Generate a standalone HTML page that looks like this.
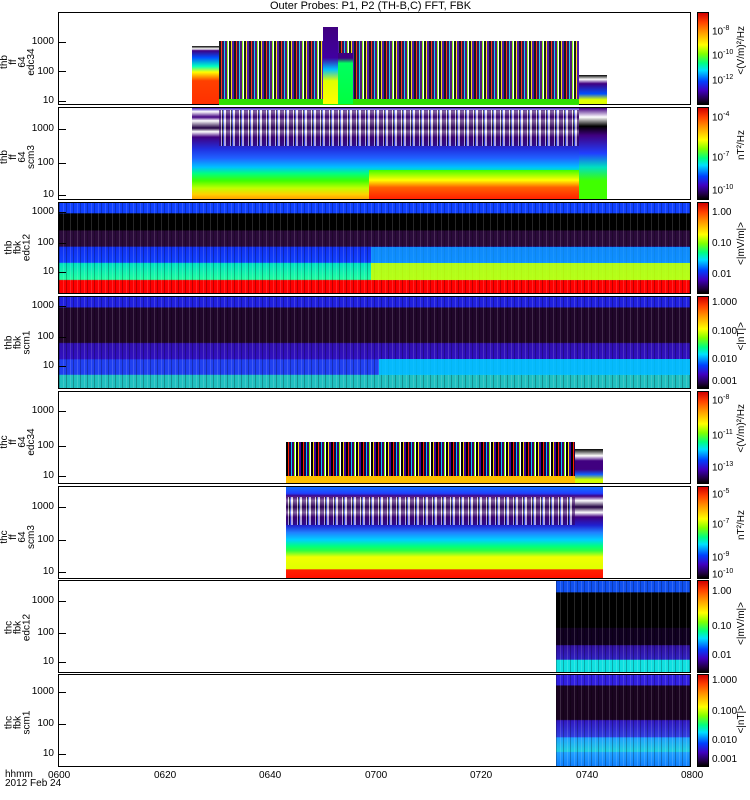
<!DOCTYPE html>
<html><head><meta charset="utf-8"><style>
body{margin:0;background:#fff;width:750px;height:800px;position:relative;overflow:hidden;font-family:"Liberation Sans",sans-serif;font-size:10px;color:#000}
.a{position:absolute}
.p{position:absolute;left:58px;width:633px;border:1px solid #000;box-sizing:border-box}
.cb{position:absolute;left:697px;width:12px;border:1px solid #000;box-sizing:border-box;background:linear-gradient(#d00000,#ff4000 10%,#ff9000 20%,#ffff00 35%,#80ff00 45%,#00ff80 55%,#00e0ff 63%,#0040ff 75%,#4000c0 85%,#200040 95%,#000)}
.yl{position:absolute;left:22px;width:32px;text-align:right;font-size:10px;line-height:10px}
.cl{position:absolute;left:712px;font-size:10px;line-height:10px}
.tt{position:absolute;font-size:10px;line-height:9px;text-align:center;transform:rotate(-90deg);transform-origin:center;white-space:pre}
.un{position:absolute;left:736px;font-size:10px;writing-mode:vertical-rl;transform:rotate(180deg);white-space:nowrap}
.tk{position:absolute;left:58px;width:8px;height:1px;background:#000}
.sp{background:repeating-linear-gradient(90deg,#000 0 2px,#ff2000 2px 3px,#200040 3px 5px,#00c0ff 5px 6px,#3a006a 6px 8px,#80ff00 8px 9px,#fff 9px 10px,#000 10px 12px,#ffe000 12px 13px,#4000a0 13px 15px)}
.n1{background:repeating-linear-gradient(90deg,#3a006a 0 2px,#fff 2px 3px,#000 3px 4px,#2040ff 4px 5px,#fff 5px 7px,#30005a 7px 9px)}
.st{background-image:repeating-linear-gradient(90deg,rgba(0,0,0,.25) 0 1px,transparent 1px 4px,rgba(255,255,255,.15) 4px 5px,transparent 5px 7px)}
</style></head><body>
<div class="a" style="left:270px;top:0;font-size:11px">Outer Probes: P1, P2 (TH-B,C) FFT, FBK</div>

<!-- Panel 1 -->
<div class="p" style="top:12px;height:93px">
 <div class="a" style="left:133px;top:33px;width:27px;height:58px;background:linear-gradient(#000 0,#fff 5%,#400080 8%,#0050ff 20%,#00ffc0 35%,#ffff00 45%,#ff4000 60%,#ff3000)"></div>
 <div class="a sp" style="left:160px;top:28px;width:360px;height:58px;opacity:.9"></div>
 <div class="a" style="left:160px;top:86px;width:360px;height:6px;background:#30e000"></div>
 <div class="a" style="left:264px;top:14px;width:15px;height:77px;background:linear-gradient(#400080,#4000a0 40%,#00c0ff 55%,#e0ff00 70%,#ffff00)"></div>
 <div class="a" style="left:279px;top:40px;width:15px;height:51px;background:linear-gradient(#400080 10%,#00ff60 20%,#00ff40)"></div>
 <div class="a" style="left:520px;top:62px;width:28px;height:29px;background:linear-gradient(#000,#fff 15%,#400080 30%,#0050ff 65%,#e0ff00 85%)"></div>
</div>
<div class="cb" style="top:12px;height:93px"></div>
<div class="tk" style="top:42px"></div><div class="tk" style="top:71px"></div><div class="tk" style="top:101px"></div>
<div class="yl" style="top:37px">1000</div><div class="yl" style="top:67px">100</div><div class="yl" style="top:96px">10</div>
<div class="tt" style="left:-2px;top:44px;width:40px">thb
ff
64
edc34</div>
<div class="cl" style="top:24px">10<sup style="font-size:7px">-8</sup></div><div class="cl" style="top:48px">10<sup style="font-size:7px">-10</sup></div><div class="cl" style="top:73px">10<sup style="font-size:7px">-12</sup></div>
<div class="un" style="top:26px">&lt;(V/m)²/Hz</div>

<!-- Panel 2 -->
<div class="p" style="top:107px;height:93px">
 <div class="a st" style="left:133px;top:0;width:387px;height:91px;background:linear-gradient(#4020c0 0,#fff 4%,#400080 10%,#fff 14%,#200040 22%,#fff 26%,#400080 32%,#2030e0 45%,#2060ff 55%,#00c0ff 65%,#00ff80 72%,#40ff00 80%,#c0ff00 88%,#ffd000 95%,#ffa000)"></div>
 <div class="a n1" style="left:160px;top:2px;width:360px;height:36px;opacity:.6"></div>
 <div class="a" style="left:310px;top:62px;width:210px;height:29px;background:linear-gradient(#40ff00,#ffff00 35%,#ff6000 60%,#ff2000)"></div>
 <div class="a" style="left:520px;top:0;width:28px;height:91px;background:linear-gradient(#400080,#fff 10%,#000 20%,#400080 30%,#2040ff 50%,#00e0c0 65%,#40ff00 80%,#40ff00)"></div>
</div>
<div class="cb" style="top:107px;height:93px"></div>
<div class="tk" style="top:129px"></div><div class="tk" style="top:163px"></div><div class="tk" style="top:195px"></div>
<div class="yl" style="top:124px">1000</div><div class="yl" style="top:158px">100</div><div class="yl" style="top:190px">10</div>
<div class="tt" style="left:-2px;top:139px;width:40px">thb
ff
64
scm3</div>
<div class="cl" style="top:110px">10<sup style="font-size:7px">-4</sup></div><div class="cl" style="top:150px">10<sup style="font-size:7px">-7</sup></div><div class="cl" style="top:183px">10<sup style="font-size:7px">-10</sup></div>
<div class="un" style="top:130px">nT²/Hz</div>

<!-- Panel 3 -->
<div class="p" style="top:202px;height:92px;background:linear-gradient(#1040ff 0,#1040ff 11%,#000 12%,#000 30%,#2a0a3a 31%,#2a0a3a 48%,#1030f0 49%,#1040ff 66%,#00e0c0 67%,#20ffa0 85%,#ff0000 86%,#ff0000)">
 <div class="a st" style="left:0;top:0;width:631px;height:90px"></div>
 <div class="a" style="left:312px;top:44px;width:319px;height:16px;background:#10b0ff;opacity:.7"></div>
 <div class="a" style="left:312px;top:60px;width:319px;height:17px;background:#d0ff00;opacity:.85"></div>
</div>
<div class="cb" style="top:202px;height:92px"></div>
<div class="tk" style="top:212px"></div><div class="tk" style="top:243px"></div><div class="tk" style="top:272px"></div>
<div class="yl" style="top:207px">1000</div><div class="yl" style="top:238px">100</div><div class="yl" style="top:267px">10</div>
<div class="tt" style="left:-2px;top:234px;width:40px">thb
fbk
edc12</div>
<div class="cl" style="top:208px">1.00</div><div class="cl" style="top:239px">0.10</div><div class="cl" style="top:270px">0.01</div>
<div class="un" style="top:222px">&lt;|mV/m|&gt;</div>

<!-- Panel 4 -->
<div class="p" style="top:296px;height:93px;background:linear-gradient(#2020e0 0,#2020e0 11%,#20062a 12%,#20062a 50%,#3010b0 51%,#3010c0 68%,#2040f0 69%,#2040f0 85%,#20c0c0 86%,#20c0c0)">
 <div class="a st" style="left:0;top:0;width:631px;height:91px"></div>
 <div class="a" style="left:320px;top:62px;width:311px;height:16px;background:#00d8ff;opacity:.8"></div>
</div>
<div class="cb" style="top:296px;height:93px"></div>
<div class="tk" style="top:306px"></div><div class="tk" style="top:337px"></div><div class="tk" style="top:366px"></div>
<div class="yl" style="top:301px">1000</div><div class="yl" style="top:332px">100</div><div class="yl" style="top:361px">10</div>
<div class="tt" style="left:-2px;top:329px;width:40px">thb
fbk
scm1</div>
<div class="cl" style="top:298px">1.000</div><div class="cl" style="top:327px">0.100</div><div class="cl" style="top:355px">0.010</div><div class="cl" style="top:377px">0.001</div>
<div class="un" style="top:322px">&lt;|nT|&gt;</div>

<!-- Panel 5 -->
<div class="p" style="top:391px;height:93px">
 <div class="a sp" style="left:227px;top:50px;width:289px;height:41px"></div>
 <div class="a" style="left:227px;top:84px;width:289px;height:7px;background:#ffc000"></div>
 <div class="a" style="left:516px;top:57px;width:28px;height:34px;background:linear-gradient(#000,#fff 20%,#400080 35%,#400080 60%,#1060ff 75%,#d0ff00 90%)"></div>
</div>
<div class="cb" style="top:391px;height:93px"></div>
<div class="tk" style="top:411px"></div><div class="tk" style="top:446px"></div><div class="tk" style="top:476px"></div>
<div class="yl" style="top:406px">1000</div><div class="yl" style="top:441px">100</div><div class="yl" style="top:471px">10</div>
<div class="tt" style="left:-2px;top:424px;width:40px">thc
ff
64
edc34</div>
<div class="cl" style="top:393px">10<sup style="font-size:7px">-8</sup></div><div class="cl" style="top:428px">10<sup style="font-size:7px">-11</sup></div><div class="cl" style="top:460px">10<sup style="font-size:7px">-13</sup></div>
<div class="un" style="top:404px">&lt;(V/m)²/Hz</div>

<!-- Panel 6 -->
<div class="p" style="top:486px;height:93px">
 <div class="a st" style="left:227px;top:0;width:317px;height:91px;background:linear-gradient(#1070ff 0,#2040ff 7%,#400080 10%,#fff 15%,#200040 22%,#fff 28%,#400080 33%,#2020d0 42%,#2080ff 50%,#00d0ff 58%,#00ff80 65%,#30ff40 70%,#f0ff00 77%,#e0ff00 90%,#ff2000 91%,#ff1000)"></div>
 <div class="a n1" style="left:227px;top:10px;width:289px;height:28px;opacity:.6"></div>
</div>
<div class="cb" style="top:486px;height:93px"></div>
<div class="tk" style="top:507px"></div><div class="tk" style="top:540px"></div><div class="tk" style="top:572px"></div>
<div class="yl" style="top:502px">1000</div><div class="yl" style="top:535px">100</div><div class="yl" style="top:567px">10</div>
<div class="tt" style="left:-2px;top:519px;width:40px">thc
ff
64
scm3</div>
<div class="cl" style="top:487px">10<sup style="font-size:7px">-5</sup></div><div class="cl" style="top:517px">10<sup style="font-size:7px">-7</sup></div><div class="cl" style="top:550px">10<sup style="font-size:7px">-9</sup></div><div class="cl" style="top:567px">10<sup style="font-size:7px">-10</sup></div>
<div class="un" style="top:510px">nT²/Hz</div>

<!-- Panel 7 -->
<div class="p" style="top:580px;height:93px">
 <div class="a" style="left:497px;top:0;width:134px;height:91px;background:linear-gradient(#1050f0 0,#1050f0 12%,#000 13%,#000 51%,#100020 52%,#100020 70%,#3010a0 71%,#3020c0 86%,#10e0e0 87%,#10e0e0)"></div>
 <div class="a st" style="left:497px;top:0;width:134px;height:91px"></div>
</div>
<div class="cb" style="top:580px;height:93px"></div>
<div class="tk" style="top:601px"></div><div class="tk" style="top:633px"></div><div class="tk" style="top:662px"></div>
<div class="yl" style="top:596px">1000</div><div class="yl" style="top:628px">100</div><div class="yl" style="top:657px">10</div>
<div class="tt" style="left:-2px;top:614px;width:40px">thc
fbk
edc12</div>
<div class="cl" style="top:587px">1.00</div><div class="cl" style="top:622px">0.10</div><div class="cl" style="top:651px">0.01</div>
<div class="un" style="top:602px">&lt;|mV/m|&gt;</div>

<!-- Panel 8 -->
<div class="p" style="top:674px;height:93px">
 <div class="a" style="left:497px;top:0;width:134px;height:91px;background:linear-gradient(#3020e0 0,#3020e0 11%,#1a0420 12%,#1a0420 49%,#3018c0 50%,#3040e0 68%,#20a0ff 69%,#20d0e0 84%,#20a0ff 85%,#1080ff)"></div>
 <div class="a st" style="left:497px;top:0;width:134px;height:91px"></div>
</div>
<div class="cb" style="top:674px;height:93px"></div>
<div class="tk" style="top:692px"></div><div class="tk" style="top:724px"></div><div class="tk" style="top:754px"></div>
<div class="yl" style="top:687px">1000</div><div class="yl" style="top:719px">100</div><div class="yl" style="top:749px">10</div>
<div class="tt" style="left:-2px;top:709px;width:40px">thc
fbk
scm1</div>
<div class="cl" style="top:676px">1.000</div><div class="cl" style="top:707px">0.100</div><div class="cl" style="top:736px">0.010</div><div class="cl" style="top:755px">0.001</div>
<div class="un" style="top:705px">&lt;|nT|&gt;</div>

<!-- time axis -->
<div class="a" style="left:5px;top:770px;font-size:10px;line-height:9px">hhmm<br>2012 Feb 24</div>
<div class="a" style="left:48px;top:770px">0600</div>
<div class="a" style="left:154px;top:770px">0620</div>
<div class="a" style="left:259px;top:770px">0640</div>
<div class="a" style="left:365px;top:770px">0700</div>
<div class="a" style="left:470px;top:770px">0720</div>
<div class="a" style="left:576px;top:770px">0740</div>
<div class="a" style="left:681px;top:770px">0800</div>
</body></html>
